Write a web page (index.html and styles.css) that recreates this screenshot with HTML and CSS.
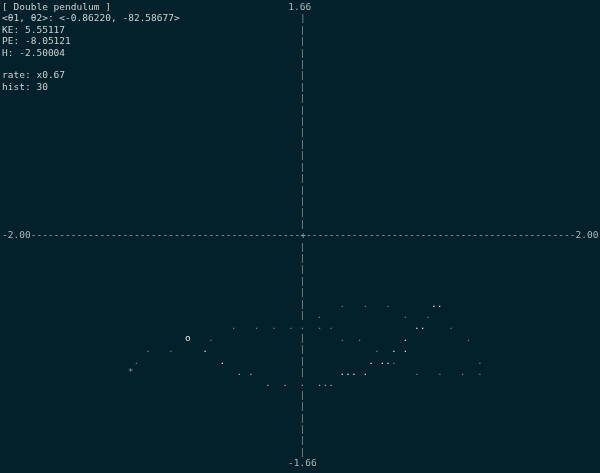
FILE: index.html
```html
<!DOCTYPE html>
<html lang="en">

<head>
    <meta charset="UTF-8">
    <meta name="viewport" content="width=device-width, initial-scale=1.0">
    <title>Double pendulum</title>
    <link rel="stylesheet" href="styles.css">
</head>

<body>

    <!-- Terminal screen, filled by the script below -->
    <pre class="term" id="term"></pre>

    <script>
        const COLS = 104;
        const ROWS = 41;
        const MID_COL = 52;
        const MID_ROW = 20;

        // Empty grid of cells
        const grid = [];
        for (let r = 0; r < ROWS; r++) {
            const row = [];
            for (let c = 0; c < COLS; c++) row.push({ ch: " ", cls: "" });
            grid.push(row);
        }

        function put(r, c, text, cls) {
            for (let i = 0; i < text.length; i++) {
                grid[r][c + i] = { ch: text[i], cls: cls };
            }
        }

        // Axes
        for (let r = 1; r < ROWS - 1; r++) put(r, MID_COL, "|", "vaxis");
        for (let c = 0; c < COLS; c++) put(MID_ROW, c, "-", "haxis");
        put(MID_ROW, MID_COL, "+", "haxis");
        put(MID_ROW, 0, "-2.00", "label");
        put(MID_ROW, COLS - 4, "2.00", "label");
        put(0, MID_COL - 2, "1.66", "label");
        put(ROWS - 1, MID_COL - 2, "-1.66", "label");

        // Info panel
        const info = [
            "[ Double pendulum ]",
            "<θ1, θ2>: <-0.86220, -82.58677>",
            "KE: 5.55117",
            "PE: -8.05121",
            "H: -2.50004",
            "",
            "rate: x0.67",
            "hist: 30"
        ];
        info.forEach((line, r) => put(r, 0, line, "info"));

        // Trail points: [row, col, level]
        const dots = [
            [26, 59, "dim"], [26, 63, "dim"], [26, 67, "dim"], [26, 75, "hot"], [26, 76, "hot"],
            [27, 55, "dim"], [27, 70, "dim"], [27, 74, "dim"],
            [28, 40, "dim"], [28, 44, "dim"], [28, 47, "dim"], [28, 50, "dim"], [28, 52, "dim"],
            [28, 55, "dim"], [28, 57, "dim"], [28, 72, "hot"], [28, 73, "hot"], [28, 78, "dim"],
            [29, 36, "dim"], [29, 59, "dim"], [29, 62, "dim"], [29, 70, "hot"], [29, 81, "dim"],
            [30, 25, "dim"], [30, 29, "dim"], [30, 35, "hot"], [30, 65, "dim"], [30, 68, "hot"], [30, 70, "hot"],
            [31, 23, "dim"], [31, 38, "hot"], [31, 64, "hot"], [31, 66, "hot"], [31, 67, "hot"],
            [31, 68, "dim"], [31, 83, "dim"],
            [32, 41, "mid"], [32, 43, "mid"], [32, 59, "hot"], [32, 60, "hot"], [32, 61, "hot"],
            [32, 63, "hot"], [32, 72, "dim"], [32, 76, "dim"], [32, 80, "dim"], [32, 83, "dim"],
            [33, 46, "mid"], [33, 49, "mid"], [33, 52, "mid"], [33, 55, "mid"], [33, 56, "mid"], [33, 57, "mid"]
        ];
        dots.forEach(d => put(d[0], d[1], ".", d[2]));

        // Pendulum bob and pivot
        put(29, 32, "o", "bob");
        put(32, 22, "*", "pivot");

        // Render rows
        const html = grid.map(row => row.map(cell => {
            if (cell.ch === " ") return " ";
            return '<span class="' + cell.cls + '">' + cell.ch + "</span>";
        }).join("")).join("\n");
        document.getElementById("term").innerHTML = html;
    </script>
</body>

</html>
```

FILE: styles.css
```css
/* Pantalla de terminal */
body {
    margin: 0;
    height: 100vh;
    overflow: hidden;
    background-color: #02212a;
}

.term {
    margin: 0;
    padding: 1px 2px;
    font-family: "DejaVu Sans Mono", "Liberation Mono", monospace;
    font-size: 9.5px;
    line-height: 11.4px;
    color: #c5c9c9;
    white-space: pre;
    will-change: transform;
}

/* Textos */
.info {
    color: #cdd1d1;
}

.label {
    color: #aeb6b6;
}

.vaxis {
    color: #7f9191;
}

.haxis {
    color: #a3adad;
}

/* Trayectoria */
.dim {
    color: #6c8b90;
}

.mid {
    color: #a2b2b4;
}

.hot {
    color: #e2e8e8;
}

.bob {
    color: #e8ecec;
}

.pivot {
    color: #869899;
}
```
